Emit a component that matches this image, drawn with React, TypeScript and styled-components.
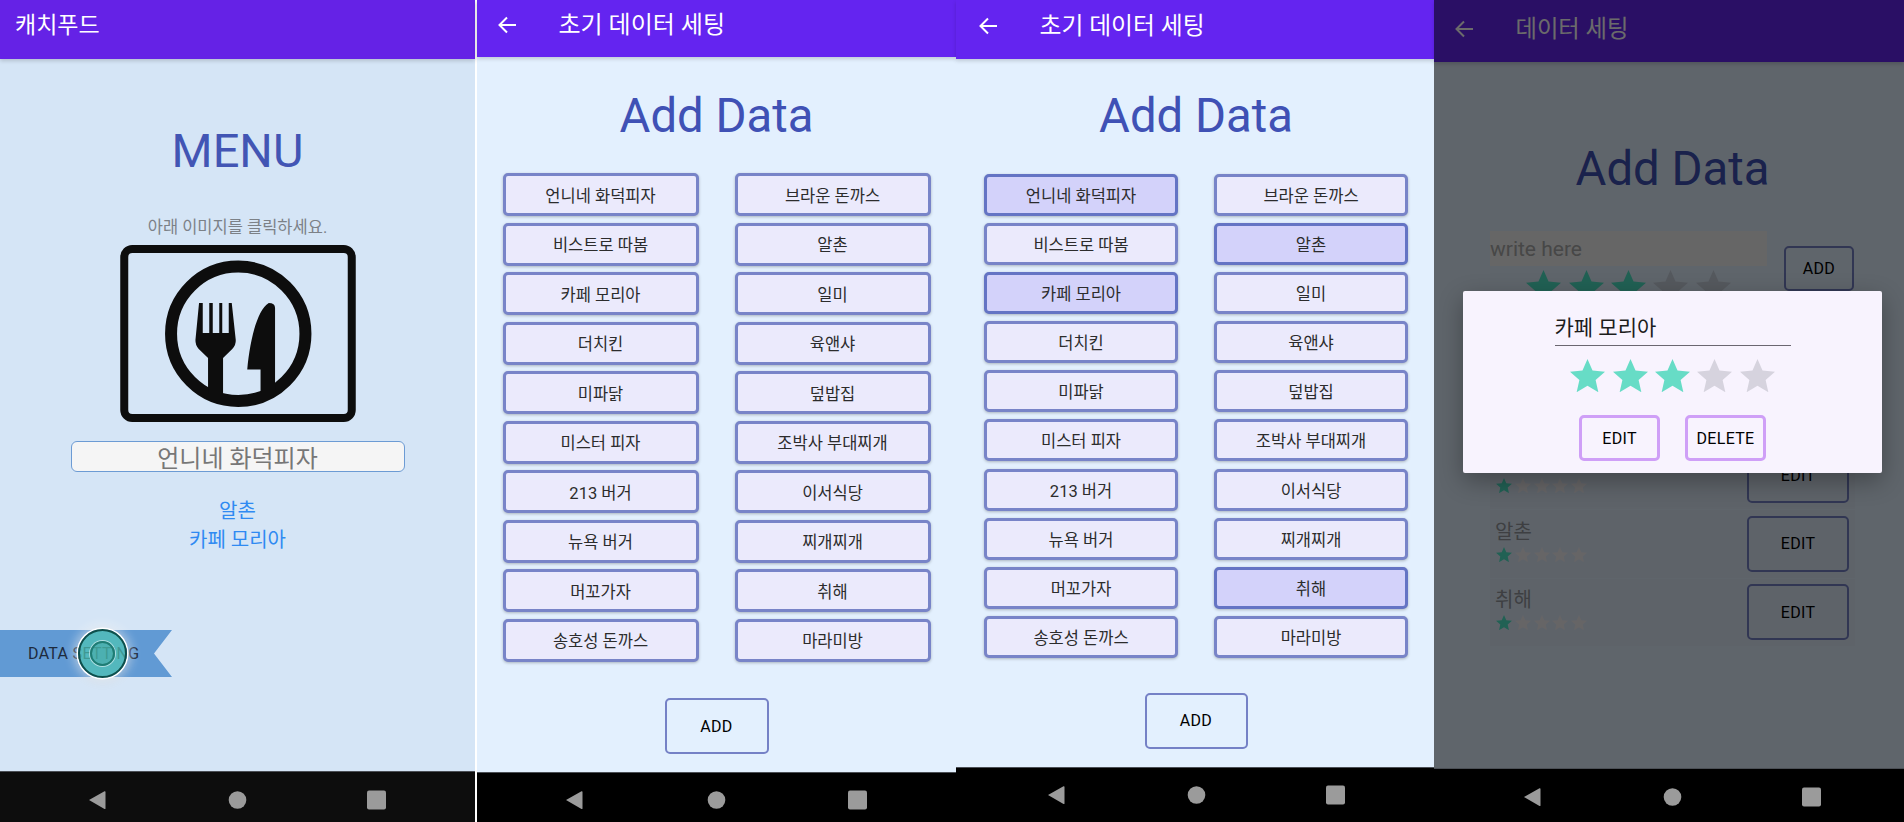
import React from "react";
import styled, { createGlobalStyle } from "styled-components";

const Global = createGlobalStyle`
  html, body { margin: 0; padding: 0; background: #fff; }
  body { font-family: Roboto, "Noto Sans CJK KR", sans-serif; overflow: hidden; }
  * { box-sizing: border-box; }
`;

const Row = styled.div`
  display: flex;
  width: 1904px;
  height: 822px;
`;

const Phone = styled.section<{ $width: number; $gapRight?: number }>`
  display: flex;
  flex-direction: column;
  flex: none;
  width: ${(p) => p.$width}px;
  height: 822px;
  margin-right: ${(p) => p.$gapRight ?? 0}px;
`;

const Screen = styled.div`
  position: relative;
  display: flex;
  flex-direction: column;
  flex: 1;
  min-height: 0;
`;

const Header = styled.header<{ $height: number; $color?: string; $pad: number; $bottom?: number }>`
  position: relative;
  z-index: 1;
  display: flex;
  align-items: center;
  flex: none;
  height: ${(p) => p.$height}px;
  padding: 0 0 ${(p) => p.$bottom ?? 7}px ${(p) => p.$pad}px;
  gap: 41.5px;
  background: ${(p) => p.$color ?? "#6424f0"};
  box-shadow: 0 2px 4px rgba(0, 0, 0, 0.16);
  color: #fff;
`;

const HeaderTitle = styled.h2<{ $size: number }>`
  margin: 0;
  font-size: ${(p) => p.$size}px;
  font-weight: 400;
  line-height: 32px;
  white-space: nowrap;
`;

const Body = styled.main<{ $bg: string; $shift?: number }>`
  display: flex;
  flex-direction: column;
  align-items: center;
  flex: 1;
  min-height: 0;
  padding-left: ${(p) => p.$shift ?? 0}px;
  background: ${(p) => p.$bg};
`;

const Nav = styled.nav<{ $height: number; $bg?: string; $shift?: number; $top: number; $gap: number }>`
  display: flex;
  align-items: center;
  justify-content: center;
  flex: none;
  gap: ${(p) => p.$gap}px;
  height: ${(p) => p.$height}px;
  padding: ${(p) => p.$top}px 0 0 ${(p) => p.$shift ?? 0}px;
  background: ${(p) => p.$bg ?? "#000"};
  border-top: 1px solid #4b4f55;
`;

const MenuTitle = styled.h1`
  margin: 62px 0 0;
  font-size: 47px;
  font-weight: 400;
  line-height: 60px;
  color: #4255b4;
`;

const Hint = styled.p`
  margin: 35px 0 0;
  font-size: 16.5px;
  line-height: 24px;
  color: #7c8187;
`;

const FoodIcon = styled.svg`
  display: block;
  flex: none;
  margin-top: 5px;
  width: 236px;
  height: 177px;
`;

const NameBox = styled.div`
  display: flex;
  align-items: center;
  justify-content: center;
  flex: none;
  width: 334px;
  height: 31px;
  margin-top: 19px;
  border: 1.5px solid #6c9bd4;
  border-radius: 6px;
  background: #f5f5f5;
  font-size: 24px;
  color: #777;
`;

const Links = styled.div`
  margin-top: 24.5px;
  font-size: 20px;
  line-height: 29px;
  text-align: center;
  color: #2f8af2;
`;

const RibbonWrap = styled.div`
  position: relative;
  align-self: flex-start;
  margin-top: 75.5px;
`;

const Ribbon = styled.div`
  width: 172px;
  height: 47px;
  padding-left: 28px;
  background: #619ad4;
  clip-path: polygon(0 0, 100% 0, 154px 50%, 100% 100%, 0 100%);
  font-size: 16px;
  line-height: 47px;
  color: #1d2a3d;
  letter-spacing: 0.3px;
`;

const Touch = styled.div`
  position: absolute;
  left: 78px;
  top: -1px;
  display: flex;
  align-items: center;
  justify-content: center;
  width: 49px;
  height: 49px;
  border: 2px solid #0e4f4b;
  border-radius: 50%;
  background: rgba(78, 196, 180, 0.72);
  box-shadow: 0 0 0 1.5px #fff, 0 0 10px 5px rgba(255, 255, 255, 0.45), 0 2px 8px 3px rgba(0, 0, 0, 0.08);
`;

const TouchCore = styled.div`
  width: 25px;
  height: 25px;
  border: 2.5px solid #1f7c74;
  border-radius: 50%;
  background: rgba(60, 160, 150, 0.3);
  box-shadow: 0 0 0 1px rgba(255, 255, 255, 0.55);
`;

const PageTitle = styled.h1<{ $top: number }>`
  margin: ${(p) => p.$top}px 0 0;
  font-size: 47.3px;
  font-weight: 400;
  line-height: 56px;
  color: #3f51b5;
`;

const Grid = styled.div<{ $col: number; $h: number; $gap: number; $top: number }>`
  display: grid;
  grid-template-columns: ${(p) => p.$col}px ${(p) => p.$col}px;
  grid-auto-rows: ${(p) => p.$h}px;
  column-gap: 36px;
  row-gap: ${(p) => p.$gap}px;
  margin-top: ${(p) => p.$top}px;
`;

const Chip = styled.button<{ $on?: boolean }>`
  display: flex;
  align-items: center;
  justify-content: center;
  padding: 0;
  border: 3px solid ${(p) => (p.$on ? "#6474c4" : "#7884c8")};
  border-radius: 5px;
  background: ${(p) => (p.$on ? "#d3d2fa" : "#ebeafc")};
  box-shadow: 0 1px 3px rgba(0, 0, 0, 0.25);
  font-family: inherit;
  font-size: 16.5px;
  color: #2c2c2c;
`;

const OutlineButton = styled.button<{ $w: number; $h: number; $top?: number; $color?: string; $bw?: number }>`
  flex: none;
  width: ${(p) => p.$w}px;
  height: ${(p) => p.$h}px;
  margin-top: ${(p) => p.$top ?? 0}px;
  padding: 0;
  border: ${(p) => p.$bw ?? 2}px solid ${(p) => p.$color ?? "#7581c6"};
  border-radius: 5px;
  background: transparent;
  font-family: inherit;
  font-size: 16px;
  letter-spacing: 0.3px;
  color: #000;
`;

const FormRow = styled.div`
  display: flex;
  align-self: flex-start;
  margin: 34px 0 0 49px;
  gap: 17px;
`;

const FormLeft = styled.div`
  width: 277px;
`;

const WriteBox = styled.div`
  height: 35px;
  background: #f3f4f3;
  font-size: 21px;
  line-height: 37px;
  color: #a9a9a9;
`;

const Stars = styled.div<{ $gap: number; $top?: number; $pad?: number; $center?: boolean }>`
  display: flex;
  justify-content: ${(p) => (p.$center ? "center" : "flex-start")};
  gap: ${(p) => p.$gap}px;
  margin-top: ${(p) => p.$top ?? 0}px;
  padding-left: ${(p) => p.$pad ?? 0}px;
`;

const StarIcon = styled.svg<{ $size: number }>`
  display: block;
  flex: none;
  width: ${(p) => p.$size}px;
  height: ${(p) => p.$size * 0.95}px;
`;

const List = styled.div`
  align-self: flex-start;
  width: 365px;
  margin: 138.4px 0 0 49px;
`;

const ListRow = styled.div`
  display: flex;
  align-items: center;
  justify-content: space-between;
  height: 68.5px;
  padding-right: 6px;
  background: #e0edfb;
  border-bottom: 1px solid #e3f0fe;
`;

const ItemInfo = styled.div`
  padding-bottom: 9.5px;
`;

const ItemName = styled.div`
  padding-left: 5px;
  font-size: 20px;
  line-height: 30px;
  color: #93979d;
`;

const Scrim = styled.div`
  position: absolute;
  inset: 0;
  z-index: 2;
  background: rgba(0, 0, 0, 0.58);
`;

const Dialog = styled.div`
  position: absolute;
  left: 29px;
  top: 291px;
  z-index: 3;
  display: flex;
  flex-direction: column;
  align-items: center;
  width: 419px;
  height: 182px;
  padding-top: 22px;
  border-radius: 2px;
  background: #f8f3fe;
  box-shadow: 0 8px 24px rgba(0, 0, 0, 0.3);
`;

const DialogField = styled.div`
  width: 236px;
  height: 33px;
  border-bottom: 1px solid #6b6670;
  font-size: 21px;
  line-height: 30px;
  color: #1c1c1c;
`;

const DialogActions = styled.div`
  display: flex;
  gap: 25px;
  margin-top: 23px;
`;

const RAW = [
  ["언니네 화덕피자", "브라운 돈까스"],
  ["비스트로 따봄", "알촌"],
  ["카페 모리아", "일미"],
  ["더치킨", "육앤샤"],
  ["미파닭", "덮밥집"],
  ["미스터 피자", "조박사 부대찌개"],
  ["213 버거", "이서식당"],
  ["뉴욕 버거", "찌개찌개"],
  ["머꼬가자", "취해"],
  ["송호성 돈까스", "마라미방"],
];

const Star = ({ size, color }: { size: number; color: string }) => (
  <StarIcon $size={size} viewBox="1.2 1.5 21.6 20.5">
    <polygon fill={color} points="12,1.5 15.1,8.6 22.8,9.3 17,14.4 18.7,22 12,18 5.3,22 7,14.4 1.2,9.3 8.9,8.6" />
  </StarIcon>
);

const Rating = ({
  filled,
  size,
  gap,
  on,
  off,
  top,
  pad,
  center,
}: {
  filled: number;
  size: number;
  gap: number;
  on: string;
  off: string;
  top?: number;
  pad?: number;
  center?: boolean;
}) => (
  <Stars $gap={gap} $top={top} $pad={pad} $center={center}>
    {[0, 1, 2, 3, 4].map((i) => (
      <Star key={i} size={size} color={i < filled ? on : off} />
    ))}
  </Stars>
);

const Arrow = () => (
  <svg width="20" height="20" viewBox="0 0 20 20" fill="none" stroke="#fff" strokeWidth="2">
    <path d="M19 10H2.5M10 2.5 2.5 10l7.5 7.5" />
  </svg>
);

const NavIcons = () => (
  <>
    <svg width="19" height="20" viewBox="2 0 19 20">
      <path d="M17.5 1.2 2 10l15.5 9c.5.2 1 0 1-.6V1.8c0-.6-.5-.8-1-.6Z" fill="#9b9b9b" />
    </svg>
    <svg width="19" height="20" viewBox="0 0 19 20">
      <circle cx="9.5" cy="10" r="8.8" fill="#9b9b9b" />
    </svg>
    <svg width="19" height="20" viewBox="0 0 19 20">
      <rect x="0" y="0.5" width="19" height="19" rx="2" fill="#9b9b9b" />
    </svg>
  </>
);

const ChipGrid = ({
  col,
  h,
  gap,
  top,
  selected,
}: {
  col: number;
  h: number;
  gap: number;
  top: number;
  selected?: string[];
}) => (
  <Grid $col={col} $h={h} $gap={gap} $top={top}>
    {RAW.flat().map((name) => (
      <Chip key={name} $on={selected?.includes(name)}>
        {name}
      </Chip>
    ))}
  </Grid>
);

export default function App() {
  return (
    <Row>
      <Global />

      <Phone $width={475} $gapRight={2}>
        <Screen>
          <Header $height={59} $color="#6522e6" $pad={15} $bottom={8}>
            <HeaderTitle $size={23}>캐치푸드</HeaderTitle>
          </Header>
          <Body $bg="#d5e5f6">
            <MenuTitle>MENU</MenuTitle>
            <Hint>아래 이미지를 클릭하세요.</Hint>
            <FoodIcon viewBox="119.5 245 235.5 177">
              <rect x="123.5" y="249" width="227.5" height="169" rx="8" fill="none" stroke="#0d0d0d" strokeWidth="8" />
              <circle cx="237.5" cy="333.8" r="67.2" fill="none" stroke="#0d0d0d" strokeWidth="12" />
              <path
                fill="#0d0d0d"
                d="M198.3 303H202V333H208.5V303H212V333H218.5V303H221.5V333H228V303H231L235 340Q235.3 345 231.5 349L222.3 358V394H207.3V358L198 349Q194.5 345 194.7 340Z"
              />
              <path
                fill="#0d0d0d"
                d="M268 303Q274.3 303 274.3 308V392H259.8V369.5H246.5C249 342 256 310 268 303Z"
              />
            </FoodIcon>
            <NameBox>언니네 화덕피자</NameBox>
            <Links>
              <div>알촌</div>
              <div>카페 모리아</div>
            </Links>
            <RibbonWrap>
              <Ribbon>DATA SETTING</Ribbon>
              <Touch>
                <TouchCore />
              </Touch>
            </RibbonWrap>
          </Body>
        </Screen>
        <Nav $height={51} $bg="#0d0d0d" $top={5} $gap={120}>
          <NavIcons />
        </Nav>
      </Phone>

      <Phone $width={479}>
        <Screen>
          <Header $height={57} $pad={20}>
            <Arrow />
            <HeaderTitle $size={24}>초기 데이터 세팅</HeaderTitle>
          </Header>
          <Body $bg="#e3f0fe">
            <PageTitle $top={31}>Add Data</PageTitle>
            <ChipGrid col={196} h={43} gap={6.5} top={29} />
            <OutlineButton $w={104} $h={56} $top={36.5}>
              ADD
            </OutlineButton>
          </Body>
        </Screen>
        <Nav $height={50} $top={5} $gap={122}>
          <NavIcons />
        </Nav>
      </Phone>

      <Phone $width={478}>
        <Screen>
          <Header $height={59} $pad={22}>
            <Arrow />
            <HeaderTitle $size={23.8}>초기 데이터 세팅</HeaderTitle>
          </Header>
          <Body $bg="#e3f0fe" $shift={2}>
            <PageTitle $top={28.5}>Add Data</PageTitle>
            <ChipGrid col={194} h={42} gap={7.1} top={30.5} selected={["언니네 화덕피자", "알촌", "카페 모리아", "취해"]} />
            <OutlineButton $w={103} $h={56} $top={35}>
              ADD
            </OutlineButton>
          </Body>
        </Screen>
        <Nav $height={55} $top={0} $gap={120} $shift={2}>
          <NavIcons />
        </Nav>
      </Phone>

      <Phone $width={470}>
        <Screen>
          <Header $height={62} $pad={20} $bottom={5}>
            <Arrow />
            <HeaderTitle $size={23.3}>데이터 세팅</HeaderTitle>
          </Header>
          <Body $bg="#e3f0fe" $shift={7}>
            <PageTitle $top={79}>Add Data</PageTitle>
            <FormRow>
              <FormLeft>
                <WriteBox>write here</WriteBox>
                <Rating filled={3} size={35} gap={7.4} on="#50e6c8" off="#cbd4e0" top={4} center />
              </FormLeft>
              <OutlineButton $w={70} $h={45} $top={15}>
                ADD
              </OutlineButton>
            </FormRow>
            <List>
              {["언니네 화덕피자", "알촌", "취해"].map((name) => (
                <ListRow key={name}>
                  <ItemInfo>
                    <ItemName>{name}</ItemName>
                    <Rating filled={1} size={16} gap={2.8} on="#50e6c8" off="#f4f0f4" pad={6} />
                  </ItemInfo>
                  <OutlineButton $w={102} $h={56}>
                    EDIT
                  </OutlineButton>
                </ListRow>
              ))}
            </List>
          </Body>
          <Scrim />
          <Dialog>
            <DialogField>카페 모리아</DialogField>
            <Rating filled={3} size={35} gap={7.3} on="#67dcc6" off="#d6d3de" top={13} center />
            <DialogActions>
              <OutlineButton $w={81} $h={46} $color="#cf9ff7" $bw={3}>
                EDIT
              </OutlineButton>
              <OutlineButton $w={81} $h={46} $color="#cf9ff7" $bw={3}>
                DELETE
              </OutlineButton>
            </DialogActions>
          </Dialog>
        </Screen>
        <Nav $height={54} $shift={6} $top={2} $gap={120}>
          <NavIcons />
        </Nav>
      </Phone>
    </Row>
  );
}
